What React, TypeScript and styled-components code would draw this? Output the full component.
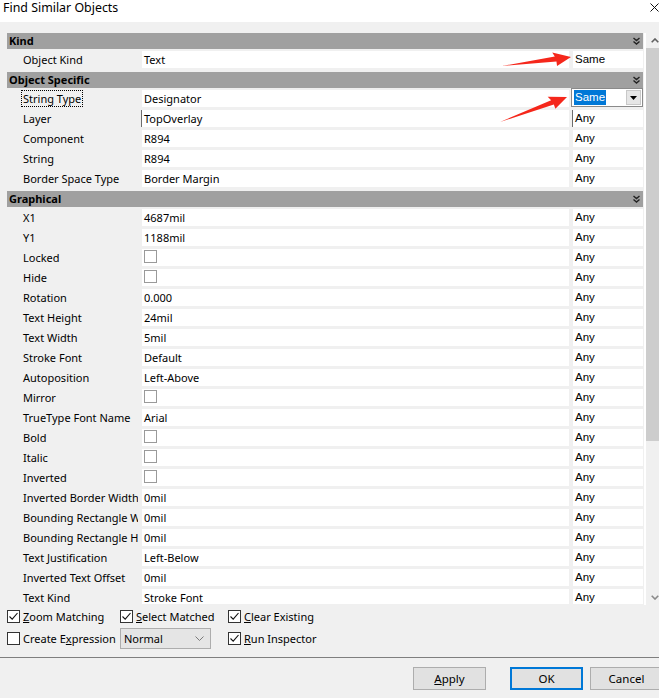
import styled, { createGlobalStyle } from "styled-components";

type Field =
  | { kind: "header"; label: string }
  | {
      kind: "field";
      label: string;
      value?: string;
      check?: boolean;
      match?: string;
      focused?: boolean;
      combo?: boolean;
      editing?: boolean;
    };

const fields: Field[] = [
  { kind: "header", label: "Kind" },
  { kind: "field", label: "Object Kind", value: "Text", match: "Same" },
  { kind: "header", label: "Object Specific" },
  { kind: "field", label: "String Type", value: "Designator", focused: true, combo: true },
  { kind: "field", label: "Layer", value: "TopOverlay", editing: true },
  { kind: "field", label: "Component", value: "R894" },
  { kind: "field", label: "String", value: "R894" },
  { kind: "field", label: "Border Space Type", value: "Border Margin" },
  { kind: "header", label: "Graphical" },
  { kind: "field", label: "X1", value: "4687mil" },
  { kind: "field", label: "Y1", value: "1188mil" },
  { kind: "field", label: "Locked", check: true },
  { kind: "field", label: "Hide", check: true },
  { kind: "field", label: "Rotation", value: "0.000" },
  { kind: "field", label: "Text Height", value: "24mil" },
  { kind: "field", label: "Text Width", value: "5mil" },
  { kind: "field", label: "Stroke Font", value: "Default" },
  { kind: "field", label: "Autoposition", value: "Left-Above" },
  { kind: "field", label: "Mirror", check: true },
  { kind: "field", label: "TrueType Font Name", value: "Arial" },
  { kind: "field", label: "Bold", check: true },
  { kind: "field", label: "Italic", check: true },
  { kind: "field", label: "Inverted", check: true },
  { kind: "field", label: "Inverted Border Width", value: "0mil" },
  { kind: "field", label: "Bounding Rectangle Width", value: "0mil" },
  { kind: "field", label: "Bounding Rectangle Height", value: "0mil" },
  { kind: "field", label: "Text Justification", value: "Left-Below" },
  { kind: "field", label: "Inverted Text Offset", value: "0mil" },
  { kind: "field", label: "Text Kind", value: "Stroke Font" },
];

// arrow shape pointing along +x, tail at the origin
const arrowPoints = (len: number) =>
  `0,0 ${len - 16},-2.5 ${len - 18},-7 ${len},0 ${len - 15},7 ${len - 15},2.5`;

const Arrow = ({ x1, y1, x2, y2 }: { x1: number; y1: number; x2: number; y2: number }) => {
  const len = Math.hypot(x2 - x1, y2 - y1);
  const angle = (Math.atan2(y2 - y1, x2 - x1) * 180) / Math.PI;
  return (
    <polygon
      points={arrowPoints(len)}
      fill="#f5271b"
      transform={`translate(${x1} ${y1}) rotate(${angle})`}
    />
  );
};

const Chevrons = () => (
  <svg width="7" height="8" viewBox="0 0 7 8">
    <path d="M0.5 1 L3.5 3.5 L6.5 1 M0.5 4.5 L3.5 7 L6.5 4.5" stroke="#222" strokeWidth="1.4" fill="none" />
  </svg>
);

const Tick = () => (
  <svg width="11" height="11" viewBox="0 0 11 11">
    <path d="M1.5 5.5 L4.2 8.2 L9.5 2" stroke="#111" strokeWidth="1.1" fill="none" />
  </svg>
);

const OptionCheck = ({ checked, children }: { checked: boolean; children: React.ReactNode }) => (
  <CheckItem>
    <Box>{checked && <Tick />}</Box>
    <span>{children}</span>
  </CheckItem>
);

export default function App() {
  return (
    <Window>
      <GlobalStyle />
      <TitleBar>
        <Title>Find Similar Objects</Title>
        <svg width="9" height="9" viewBox="0 0 9 9" style={{ marginTop: 3 }}>
          <path d="M0.5 0.5 L8.5 8.5 M8.5 0.5 L0.5 8.5" stroke="#111" strokeWidth="1" />
        </svg>
      </TitleBar>

      <Body>
        <GridViewport>
          {fields.map((f, i) =>
            f.kind === "header" ? (
              <HeaderRow key={i}>
                <HeaderBar>
                  <span>{f.label}</span>
                  <Chevrons />
                </HeaderBar>
              </HeaderRow>
            ) : (
              <Row key={i}>
                <Label>
                  <LabelText $focused={f.focused}>{f.label}</LabelText>
                </Label>
                <Value $editing={f.editing}>
                  {f.check ? <GridBox /> : f.value}
                </Value>
                {f.combo ? (
                  <Combo>
                    <Selected>Same</Selected>
                    <DropButton>
                      <svg width="7" height="4" viewBox="0 0 7 4">
                        <path d="M0 0 L7 0 L3.5 4 Z" fill="#000" />
                      </svg>
                    </DropButton>
                  </Combo>
                ) : (
                  <Match $editing={f.editing}>{f.match ?? "Any"}</Match>
                )}
              </Row>
            )
          )}
        </GridViewport>
        <Scrollbar>
          <ScrollArrow>
            <svg width="8" height="5" viewBox="0 0 8 5">
              <path d="M0.7 4.3 L4 1 L7.3 4.3" stroke="#606060" strokeWidth="1.6" fill="none" />
            </svg>
          </ScrollArrow>
          <Thumb />
          <ScrollArrow>
            <svg width="8" height="5" viewBox="0 0 8 5">
              <path d="M0.7 0.7 L4 4 L7.3 0.7" stroke="#8a8a8a" strokeWidth="1.6" fill="none" />
            </svg>
          </ScrollArrow>
        </Scrollbar>
      </Body>

      <Options>
        <OptionCheck checked>
          <u>Z</u>oom Matching
        </OptionCheck>
        <OptionCheck checked>
          <u>S</u>elect Matched
        </OptionCheck>
        <OptionCheck checked>
          <u>C</u>lear Existing
        </OptionCheck>
        <OptionCheck checked={false}>
          Create E<u>x</u>pression
        </OptionCheck>
        <Select>
          <span>Normal</span>
          <svg width="9" height="5" viewBox="0 0 9 5">
            <path d="M0.5 0.5 L4.5 4.5 L8.5 0.5" stroke="#7a7a7a" strokeWidth="1" fill="none" />
          </svg>
        </Select>
        <OptionCheck checked>
          <u>R</u>un Inspector
        </OptionCheck>
      </Options>

      <Footer>
        <Button>
          <u>A</u>pply
        </Button>
        <Button $default>OK</Button>
        <Button>Cancel</Button>
      </Footer>

      <Overlay width="659" height="698" viewBox="0 0 659 698">
        <Arrow x1={502} y1={66} x2={571} y2={57} />
        <Arrow x1={500} y1={122} x2={567} y2={97} />
      </Overlay>
    </Window>
  );
}

const GlobalStyle = createGlobalStyle`
  html, body {
    margin: 0;
    padding: 0;
    background: #f0f0f0;
  }
  body {
    font-family: "Noto Sans", "Open Sans", sans-serif;
    font-size: 11px;
    color: #000;
  }
`;

const Window = styled.div`
  position: relative;
  width: 659px;
  height: 698px;
  overflow: hidden;
  display: flex;
  flex-direction: column;
  background: #f0f0f0;
`;

const TitleBar = styled.div`
  height: 22px;
  flex-shrink: 0;
  background: #fff;
  display: flex;
  justify-content: space-between;
  align-items: flex-start;
  padding-left: 3px;
`;

const Title = styled.span`
  font-size: 12.4px;
  line-height: 15px;
`;

const Body = styled.div`
  display: flex;
  margin-top: 10px;
  padding-left: 7px;
`;

const GridViewport = styled.div`
  width: 637px;
  height: 572px;
  overflow: hidden;
`;

const HeaderRow = styled.div`
  height: 19px;
  padding-top: 1px;
  box-sizing: border-box;
`;

const HeaderBar = styled.div`
  width: 636px;
  height: 16px;
  background: #a0a0a0;
  display: flex;
  justify-content: space-between;
  align-items: center;
  padding: 0 3px 0 2px;
  box-sizing: border-box;
  font-weight: 700;
  line-height: 16px;
`;

const Row = styled.div`
  display: grid;
  grid-template-columns: 131px 427px 70px;
  column-gap: 4px;
  height: 20px;
  align-items: start;
`;

const Label = styled.div`
  height: 17px;
  line-height: 17px;
  padding-left: 14px;
  white-space: nowrap;
  overflow: hidden;
`;

const LabelText = styled.span<{ $focused?: boolean }>`
  display: inline-block;
  padding: 0 1px;
  height: 17px;
  box-sizing: border-box;
  border: 1px dotted ${(p) => (p.$focused ? "#000" : "transparent")};
  line-height: 15px;
`;

const Value = styled.div<{ $editing?: boolean }>`
  height: 17px;
  line-height: 17px;
  background: #fff;
  padding-left: 2px;
  white-space: nowrap;
  overflow: hidden;
  box-shadow: ${(p) => (p.$editing ? "-1px 0 0 #6d6d6d" : "none")};
`;

const Match = styled(Value)`
  font-family: "Liberation Sans", Arial, sans-serif;
  font-size: 11.5px;
`;

const GridBox = styled.div`
  width: 13px;
  height: 13px;
  margin-top: 1px;
  box-sizing: border-box;
  border: 1px solid #9a9a9a;
  background: #fff;
`;

const Combo = styled.div`
  margin: -2px 0 0 -2px;
  width: 72px;
  height: 19px;
  box-sizing: border-box;
  border: 1px solid #8a8a8a;
  background: #fff;
  display: flex;
  align-items: center;
  justify-content: space-between;
  padding: 0 1px 0 2px;
  font-family: "Liberation Sans", Arial, sans-serif;
  font-size: 11.5px;
`;

const Selected = styled.span`
  background: #0078d7;
  color: #fff;
  line-height: 15px;
  padding: 0 1px;
`;

const DropButton = styled.div`
  width: 15px;
  height: 15px;
  box-sizing: border-box;
  background: #e6e6e6;
  border: 1px solid #c8c8c8;
  display: flex;
  align-items: center;
  justify-content: center;
`;

const Scrollbar = styled.div`
  margin-left: 2px;
  margin-top: 1px;
  width: 13px;
  height: 572px;
  box-shadow: -2px 0 0 #fff;
  background: #f0f0f0;
  display: flex;
  flex-direction: column;
`;

const ScrollArrow = styled.div`
  height: 15px;
  display: flex;
  align-items: center;
  justify-content: center;
  padding-left: 4px;
`;

const Thumb = styled.div`
  height: 393px;
  background: #cdcdcd;
  margin-bottom: auto;
`;

const Options = styled.div`
  display: grid;
  grid-template-columns: 113px 108px auto;
  grid-auto-rows: 22px;
  align-items: center;
  padding-left: 7px;
  margin-top: 0px;
  font-size: 11px;
`;

const CheckItem = styled.label`
  display: flex;
  align-items: center;
  gap: 3px;
  white-space: nowrap;
`;

const Box = styled.span`
  width: 13px;
  height: 13px;
  box-sizing: border-box;
  border: 1px solid #333;
  background: #fff;
  display: flex;
  align-items: center;
  justify-content: center;
`;

const Select = styled.div`
  width: 91px;
  height: 21px;
  box-sizing: border-box;
  border: 1px solid #adadad;
  background: #e5e5e5;
  display: flex;
  align-items: center;
  justify-content: space-between;
  padding: 0 6px 0 3px;
`;

const Footer = styled.div`
  margin-top: 8px;
  border-top: 1px solid #7f7f7f;
  padding-top: 9px;
  display: flex;
  justify-content: flex-end;
  margin-right: -4px;
  gap: 7px;
`;

const Button = styled.div<{ $default?: boolean }>`
  width: 73px;
  height: 23px;
  box-sizing: border-box;
  background: #e1e1e1;
  border: ${(p) => (p.$default ? "2px solid #0078d7" : "1px solid #adadad")};
  display: flex;
  align-items: center;
  justify-content: center;
  font-size: 11.5px;

  &:first-child {
    margin-right: 17px;
  }
`;

const Overlay = styled.svg`
  position: absolute;
  left: 0;
  top: 0;
  pointer-events: none;
`;
